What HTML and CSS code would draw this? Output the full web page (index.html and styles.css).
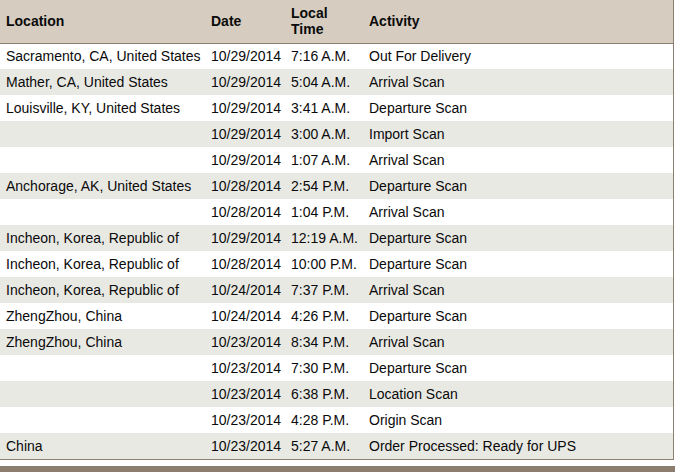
FILE: index.html
```html
<!DOCTYPE html>
<html>
<head>
<meta charset="utf-8">
<link rel="stylesheet" href="styles.css">
</head>
<body>
<div class="wrap">
<table class="track">
  <colgroup>
    <col class="c-loc"><col class="c-date"><col class="c-time"><col class="c-act">
  </colgroup>
  <thead>
    <tr><th>Location</th><th>Date</th><th>Local<br>Time</th><th>Activity</th></tr>
  </thead>
  <tbody>
    <tr><td>Sacramento, CA, United States</td><td>10/29/2014</td><td>7:16 A.M.</td><td>Out For Delivery</td></tr>
    <tr><td>Mather, CA, United States</td><td>10/29/2014</td><td>5:04 A.M.</td><td>Arrival Scan</td></tr>
    <tr><td>Louisville, KY, United States</td><td>10/29/2014</td><td>3:41 A.M.</td><td>Departure Scan</td></tr>
    <tr><td></td><td>10/29/2014</td><td>3:00 A.M.</td><td>Import Scan</td></tr>
    <tr><td></td><td>10/29/2014</td><td>1:07 A.M.</td><td>Arrival Scan</td></tr>
    <tr><td>Anchorage, AK, United States</td><td>10/28/2014</td><td>2:54 P.M.</td><td>Departure Scan</td></tr>
    <tr><td></td><td>10/28/2014</td><td>1:04 P.M.</td><td>Arrival Scan</td></tr>
    <tr><td>Incheon, Korea, Republic of</td><td>10/29/2014</td><td>12:19 A.M.</td><td>Departure Scan</td></tr>
    <tr><td>Incheon, Korea, Republic of</td><td>10/28/2014</td><td>10:00 P.M.</td><td>Departure Scan</td></tr>
    <tr><td>Incheon, Korea, Republic of</td><td>10/24/2014</td><td>7:37 P.M.</td><td>Arrival Scan</td></tr>
    <tr><td>ZhengZhou, China</td><td>10/24/2014</td><td>4:26 P.M.</td><td>Departure Scan</td></tr>
    <tr><td>ZhengZhou, China</td><td>10/23/2014</td><td>8:34 P.M.</td><td>Arrival Scan</td></tr>
    <tr><td></td><td>10/23/2014</td><td>7:30 P.M.</td><td>Departure Scan</td></tr>
    <tr><td></td><td>10/23/2014</td><td>6:38 P.M.</td><td>Location Scan</td></tr>
    <tr><td></td><td>10/23/2014</td><td>4:28 P.M.</td><td>Origin Scan</td></tr>
    <tr><td>China</td><td>10/23/2014</td><td>5:27 A.M.</td><td>Order Processed: Ready for UPS</td></tr>
  </tbody>
</table>
<div class="footer-bar"></div>
</div>
</body>
</html>
```

FILE: styles.css
```css
html, body {
  margin: 0;
  padding: 0;
  background: #ffffff;
}
body {
  font-family: "Liberation Sans", Arial, Helvetica, sans-serif;
  font-size: 14px;
  color: #0a0a0a;
}
.wrap {
  width: 675px;
}
.track {
  width: 674px;
  border-collapse: collapse;
  table-layout: fixed;
  border-right: 1px solid #8c7f70;
  border-bottom: 1px solid #8c7f70;
}
.c-loc { width: 205px; }
.c-date { width: 80px; }
.c-time { width: 78px; }
.c-act { width: auto; }
.track thead tr {
  height: 43px;
}
.track th {
  background: #d6cdc0;
  text-align: left;
  font-weight: bold;
  font-size: 14px;
  line-height: 16px;
  padding: 0 0 1px 6px;
  vertical-align: middle;
  border-bottom: 1px solid #8c7f70;
}
.track tbody tr {
  height: 26px;
}
.track td {
  padding: 0 0 0 6px;
  line-height: 16px;
  vertical-align: middle;
  white-space: nowrap;
}
.track tbody tr:nth-child(even) td {
  background: #e9e9e4;
}
.footer-bar {
  margin-top: 6px;
  height: 8px;
  background: #8b7e6e;
  width: 675px;
}
```
